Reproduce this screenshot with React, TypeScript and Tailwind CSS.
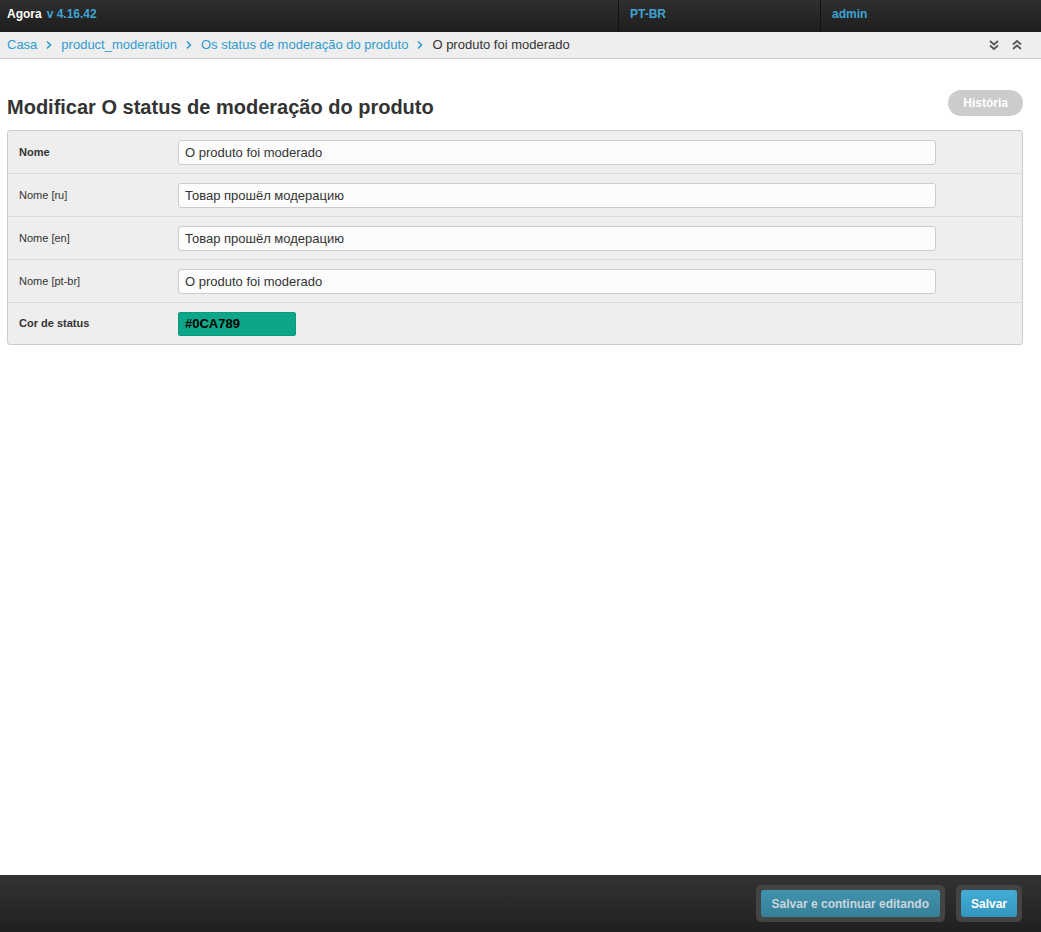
import { useState } from "react";

const ROWS = [
  { key: "name", label: "Nome", value: "O produto foi moderado", bold: true },
  { key: "name_ru", label: "Nome [ru]", value: "Товар прошёл модерацию" },
  { key: "name_en", label: "Nome [en]", value: "Товар прошёл модерацию" },
  { key: "name_pt", label: "Nome [pt-br]", value: "O produto foi moderado" },
];

const CRUMBS = ["Casa", "product_moderation", "Os status de moderação do produto"];

const Chevron = () => (
  <svg width="8" height="10" viewBox="0 0 8 10" className="mx-[8px]">
    <path d="M2 1.5 L5.5 5 L2 8.5" stroke="#309bcf" strokeWidth="1.6" fill="none" />
  </svg>
);

const DoubleChevron = ({ up }: { up?: boolean }) => (
  <svg width="12" height="12" viewBox="0 0 12 12" className={up ? "rotate-180" : ""}>
    <path d="M2 2 L6 5.5 L10 2 M2 6.5 L6 10 L10 6.5" stroke="#555" strokeWidth="1.7" fill="none" />
  </svg>
);

export default function App() {
  const [form, setForm] = useState<Record<string, string>>(
    Object.fromEntries(ROWS.map((r) => [r.key, r.value]))
  );

  return (
    <div className="min-h-screen flex flex-col bg-white text-[#333] font-['Liberation_Sans',Arial,sans-serif]">
      {/* Top bar */}
      <div className="h-8 flex bg-gradient-to-b from-[#2f2f2f] to-[#1d1d1d] text-xs font-bold leading-4">
        <div className="flex-1 flex items-start pt-[6px] pl-[7px] gap-[5px]">
          <span className="text-white">Agora</span>
          <span className="text-[#3ea4d4]">v 4.16.42</span>
        </div>
        <div className="w-[202px] flex items-start pt-[6px] pl-[11px] border-l border-[#111] text-[#3ea4d4]">
          PT-BR
        </div>
        <div className="w-[221px] flex items-start pt-[6px] pl-[11px] border-l border-[#111] text-[#3ea4d4]">
          admin
        </div>
      </div>

      {/* Breadcrumbs */}
      <div className="h-[27px] flex items-center justify-between bg-[#eeeeee] border-b border-[#cfcfcf] pl-[7px] pr-[18px] text-[13px]">
        <div className="flex items-center">
          {CRUMBS.map((c) => (
            <span key={c} className="flex items-center">
              <a className="text-[#309bcf]">{c}</a>
              <Chevron />
            </span>
          ))}
          <span className="text-[#333]">O produto foi moderado</span>
        </div>
        <div className="flex items-center gap-[11px]">
          <DoubleChevron />
          <DoubleChevron up />
        </div>
      </div>

      {/* Content */}
      <div className="flex-1 pl-[7px] pr-[18px] pt-[31px]">
        <div className="flex items-start justify-between">
          <h1 className="text-[20px] font-bold text-[#333] pt-[5px] leading-6">
            Modificar O status de moderação do produto
          </h1>
          <button className="h-[26px] px-[15px] rounded-full bg-[#cccccc] text-white text-xs font-bold">
            História
          </button>
        </div>

        <div className="mt-[11px] border border-[#cccccc] rounded-[3px] bg-[#eeeeee]">
          {ROWS.map((r, i) => (
            <div
              key={r.key}
              className={`flex items-center ${i > 0 ? "h-[43px] border-t border-[#dadada]" : "h-[42px]"}`}
            >
              <label className={`w-[170px] pl-[11px] text-[11px] ${r.bold ? "font-bold" : ""}`}>
                {r.label}
              </label>
              <input
                value={form[r.key]}
                onChange={(e) => setForm((p) => ({ ...p, [r.key]: e.target.value }))}
                className="w-[758px] h-[25px] px-[6px] bg-[#fcfcfc] border border-[#cccccc] rounded-[3px] text-[13px] text-[#333] outline-none"
              />
            </div>
          ))}
          <div className="h-[42px] flex items-center border-t border-[#dadada]">
            <label className="w-[170px] pl-[11px] text-[11px] font-bold">Cor de status</label>
            <div className="w-[118px] h-[24px] flex items-center px-[6px] bg-[#0ca789] border border-[#0a9a7e] rounded-[2px] text-[13px] font-bold text-black">
              #0CA789
            </div>
          </div>
        </div>
      </div>

      {/* Footer */}
      <div className="h-[57px] flex items-center justify-end gap-[11px] pr-[19px] bg-gradient-to-b from-[#333333] to-[#202020]">
        <div className="p-[5px] rounded-[5px] bg-[#444444]">
          <button className="h-[27px] px-[11px] rounded-[3px] bg-gradient-to-b from-[#4293ae] to-[#367f98] text-[#c9d6dc] text-xs font-bold">
            Salvar e continuar editando
          </button>
        </div>
        <div className="p-[5px] rounded-[5px] bg-[#444444]">
          <button className="h-[27px] px-[10px] rounded-[3px] bg-gradient-to-b from-[#43acd6] to-[#3396be] text-white text-xs font-bold">
            Salvar
          </button>
        </div>
      </div>
    </div>
  );
}
